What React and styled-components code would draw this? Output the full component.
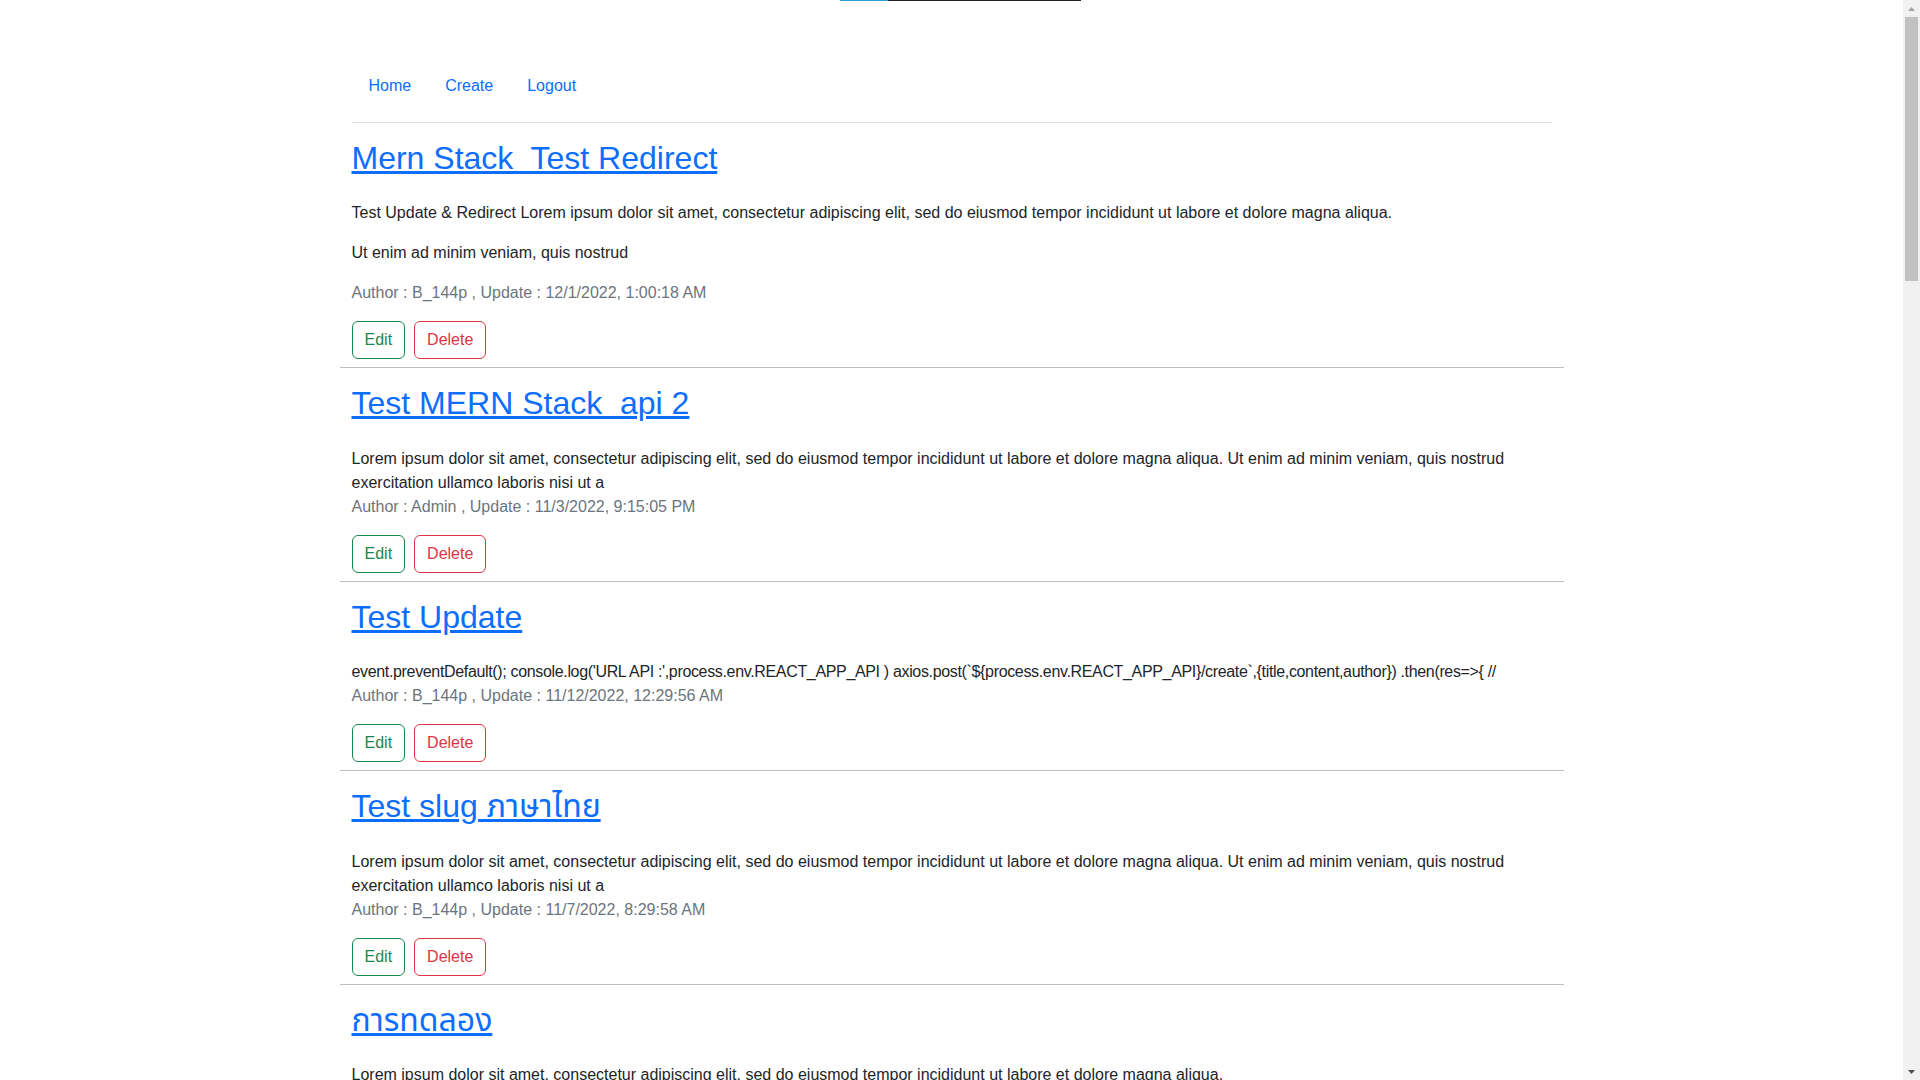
import React from "react";
import styled, { createGlobalStyle } from "styled-components";

const GlobalStyle = createGlobalStyle`
    html, body {
        margin: 0;
        padding: 0;
        background: #ffffff;
    }
    body {
        font-family: "Liberation Sans", "Noto Sans Thai", "Loma", "Garuda", "Noto Sans", sans-serif;
        font-size: 16px;
        line-height: 1.5;
        color: #212529;
    }
    * {
        box-sizing: border-box;
    }
`;

const Shell = styled.div`
    display: flex;
    width: 100%;
`;

const Page = styled.div`
    flex: 1;
    min-width: 0;
`;

/* the window scrollbar, since the browser hides its own in the photo */
const ScrollRail = styled.div`
    position: sticky;
    top: 0;
    align-self: flex-start;
    flex-shrink: 0;
    width: 17px;
    height: 100vh;
    display: flex;
    flex-direction: column;
    background: #f1f1f1;
`;

const RailButton = styled.div`
    height: 17px;
    display: flex;
    align-items: center;
    justify-content: center;
    flex-shrink: 0;
`;

const RailTrack = styled.div`
    flex: 1;
    display: flex;
    flex-direction: column;
    padding: 0 2px;
`;

const RailThumb = styled.div`
    height: 264px;
    background: #c1c1c1;
`;

const TopStrip = styled.div`
    display: flex;
    padding-left: 840px;
    height: 1px;
`;

const StripPart = styled.span`
    display: block;
    height: 1px;
    width: ${(p) => p.w}px;
    background: ${(p) => p.color};
`;

const Container = styled.div`
    width: 1224px;
    margin: 0 auto;
    padding: 65px 12px 0;
`;

const Nav = styled.nav`
    display: flex;
    align-items: center;
`;

const NavLink = styled.a`
    padding: 8px 17px;
    color: #0d6efd;
    text-decoration: none;
    font-size: 16px;
    line-height: 24px;
    cursor: pointer;
`;

const NavDivider = styled.hr`
    margin: 16px 0 0;
    border: 0;
    border-top: 1px solid #dedede;
`;

const PostRow = styled.div`
    margin: 0 -12px;
    padding: 16px 12px 8px;
    border-bottom: 1px solid #c0c0c0;
`;

const Title = styled.h2`
    margin: 0 0 24px;
    font-size: 32px;
    line-height: 1.2;
    font-weight: 400;
`;

const TitleLink = styled.a`
    color: #0d6efd;
    text-decoration: underline;
    cursor: pointer;
`;

const Para = styled.p`
    margin: 0 0 16px;
`;

const Body = styled.div`
    margin: 0;
    letter-spacing: ${(p) => (p.tight ? "-0.34px" : "normal")};
`;

const Meta = styled.p`
    margin: 0 0 16px;
    color: #6c757d;
`;

const Actions = styled.div`
    display: flex;
    gap: 9px;
`;

const OutlineButton = styled.button`
    font-family: inherit;
    font-size: 16px;
    line-height: 24px;
    padding: 6px 12px;
    background: transparent;
    border: 1px solid ${(p) => p.tone};
    color: ${(p) => p.tone};
    border-radius: 6px;
    cursor: pointer;
`;

const lorem =
    "Lorem ipsum dolor sit amet, consectetur adipiscing elit, sed do eiusmod tempor incididunt ut labore et dolore magna aliqua. Ut enim ad minim veniam, quis nostrud exercitation ullamco laboris nisi ut a";

const posts = [
    {
        title: "Mern Stack\u00a0 Test Redirect",
        paragraphs: [
            "Test Update & Redirect Lorem ipsum dolor sit amet, consectetur adipiscing elit, sed do eiusmod tempor incididunt ut labore et dolore magna aliqua.",
            "Ut enim ad minim veniam, quis nostrud",
        ],
        author: "B_144p",
        updated: "12/1/2022, 1:00:18 AM",
    },
    {
        title: "Test MERN Stack\u00a0 api 2",
        text: lorem,
        author: "Admin",
        updated: "11/3/2022, 9:15:05 PM",
    },
    {
        title: "Test Update",
        text: "event.preventDefault(); console.log('URL API :',process.env.REACT_APP_API ) axios.post(`${process.env.REACT_APP_API}/create`,{title,content,author}) .then(res=>{ //",
        tight: true,
        author: "B_144p",
        updated: "11/12/2022, 12:29:56 AM",
    },
    {
        title: "Test slug ภาษาไทย",
        text: lorem,
        author: "B_144p",
        updated: "11/7/2022, 8:29:58 AM",
    },
    {
        title: "การทดลอง",
        paragraphs: [
            "Lorem ipsum dolor sit amet, consectetur adipiscing elit, sed do eiusmod tempor incididunt ut labore et dolore magna aliqua.",
        ],
        author: "B_144p",
        updated: "11/7/2022, 8:20:11 AM",
    },
    { title: "สวัสดี", text: lorem, author: "B_144p", updated: "11/6/2022, 10:12:40 PM" },
    { title: "Hello MERN", text: lorem, author: "Admin", updated: "11/6/2022, 9:41:03 PM" },
    { title: "React Router", text: lorem, author: "Admin", updated: "11/6/2022, 7:05:22 PM" },
    { title: "Express API", text: lorem, author: "B_144p", updated: "11/5/2022, 11:48:19 PM" },
    { title: "MongoDB Atlas", text: lorem, author: "B_144p", updated: "11/5/2022, 6:30:51 PM" },
    { title: "บทความใหม่", text: lorem, author: "Admin", updated: "11/5/2022, 2:14:07 PM" },
    { title: "Test Create", text: lorem, author: "B_144p", updated: "11/4/2022, 9:58:33 PM" },
    { title: "Slug Test", text: lorem, author: "B_144p", updated: "11/4/2022, 8:22:45 PM" },
    { title: "Blog Post", text: lorem, author: "Admin", updated: "11/4/2022, 4:17:10 PM" },
    { title: "Node JS", text: lorem, author: "Admin", updated: "11/3/2022, 11:02:56 PM" },
    { title: "First Blog", text: lorem, author: "Admin", updated: "11/3/2022, 8:40:28 PM" },
    { title: "Mern Stack", text: lorem, author: "Admin", updated: "11/3/2022, 7:55:14 PM" },
];

const Post = ({ post }) => (
    <PostRow>
        <Title>
            <TitleLink>{post.title}</TitleLink>
        </Title>
        {post.paragraphs ? (
            post.paragraphs.map((p, i) => <Para key={i}>{p}</Para>)
        ) : (
            <Body tight={post.tight}>{post.text}</Body>
        )}
        <Meta>
            Author : {post.author} , Update : {post.updated}
        </Meta>
        <Actions>
            <OutlineButton tone="#198754">Edit</OutlineButton>
            <OutlineButton tone="#dc3545">Delete</OutlineButton>
        </Actions>
    </PostRow>
);

const App = () => {
    return (
        <>
            <GlobalStyle />
            <Shell>
                <Page>
                    <TopStrip>
                        <StripPart w={48} color="#2a9fd6" />
                        <StripPart w={193} color="#222222" />
                    </TopStrip>
                    <Container>
                        <Nav>
                            <NavLink>Home</NavLink>
                            <NavLink>Create</NavLink>
                            <NavLink>Logout</NavLink>
                        </Nav>
                        <NavDivider />
                        {posts.map((post, i) => (
                            <Post key={i} post={post} />
                        ))}
                    </Container>
                </Page>
                <ScrollRail>
                    <RailButton>
                        <svg width="7" height="4" viewBox="0 0 7 4">
                            <polygon points="0,4 3.5,0 7,4" fill="#a3a3a3" />
                        </svg>
                    </RailButton>
                    <RailTrack>
                        <RailThumb />
                    </RailTrack>
                    <RailButton>
                        <svg width="7" height="4" viewBox="0 0 7 4">
                            <polygon points="0,0 7,0 3.5,4" fill="#505050" />
                        </svg>
                    </RailButton>
                </ScrollRail>
            </Shell>
        </>
    );
};

export default App;
